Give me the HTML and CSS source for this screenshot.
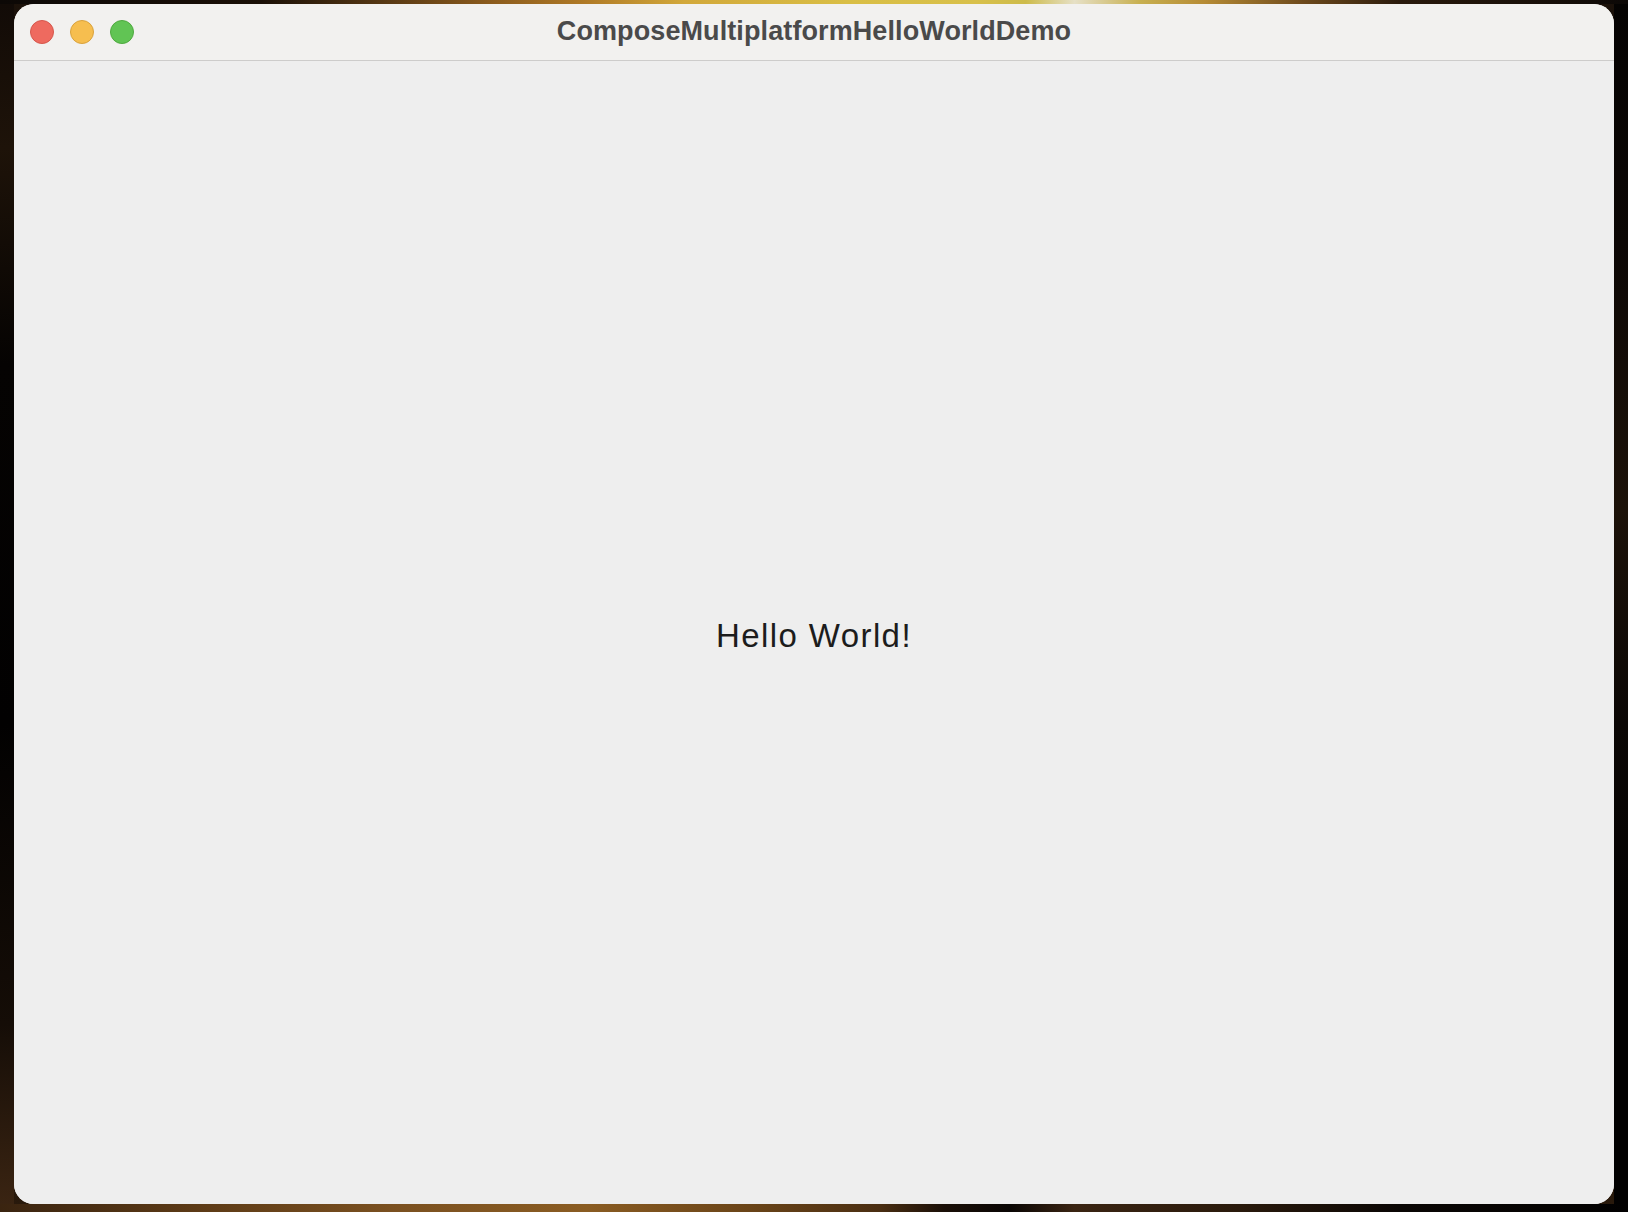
FILE: index.html
```html
<!DOCTYPE html>
<html lang="en">
<head>
<meta charset="utf-8">
<title>ComposeMultiplatformHelloWorldDemo</title>
<link rel="stylesheet" href="styles.css">
</head>
<body>
<div class="desktop">
  <div class="wall-top"></div>
  <div class="middle">
    <div class="wall-side left"></div>
    <div class="window">
      <div class="titlebar">
        <div class="lights">
          <span class="light close"></span>
          <span class="light minimize"></span>
          <span class="light zoom"></span>
        </div>
        <div class="title">ComposeMultiplatformHelloWorldDemo</div>
      </div>
      <div class="content">
        <p class="hello">Hello World!</p>
      </div>
    </div>
    <div class="wall-side right"></div>
  </div>
  <div class="wall-bottom"></div>
</div>
</body>
</html>
```
FILE: styles.css
```css
html, body {
  margin: 0;
  padding: 0;
  width: 1628px;
  height: 1212px;
  overflow: hidden;
  background: #050302;
}

.desktop {
  width: 1628px;
  height: 1212px;
  display: flex;
  flex-direction: column;
  background:
    linear-gradient(180deg, #1c120a 0%, #080504 20%, #020101 50%, #050302 75%, #2a1a0c 100%);
}

.wall-top {
  height: 4px;
  flex: none;
  background: linear-gradient(90deg,
    #0c0806 0%, #1a0f06 16%, #5a3a14 24%, #8a5a1c 30%, #b07a26 36%,
    #d2a83a 42%, #d9be45 52%, #d8c04a 60%, #cdbb4a 63%, #e6e0c6 66%, #c8b050 70%,
    #b68b34 74%, #6e4a1c 80%, #2a1a0c 86%, #0c0806 100%);
}

.middle {
  display: flex;
  flex: none;
  height: 1200px;
}

.wall-side {
  flex: none;
}
.wall-side.left {
  width: 14px;
  background: linear-gradient(180deg, #120b07 0%, #1e1309 12%, #050302 30%, #020101 60%, #150d07 85%, #3a2412 100%);
}
.wall-side.right {
  width: 14px;
  background: linear-gradient(180deg, #050302 0%, #0c0705 20%, #1c1209 42%, #0b0705 60%, #020101 80%, #020101 100%);
}

.wall-bottom {
  height: 8px;
  flex: none;
  background: linear-gradient(90deg,
    #3a2410 0%, #5c3a16 12%, #7a5020 24%, #8a5c22 36%, #6a4418 46%, #4a2e12 54%,
    #1a0f07 58%, #0a0604 62%, #3a2412 66%, #2a1a0c 76%, #0a0604 86%, #020101 100%);
}

.window {
  width: 1600px;
  height: 1200px;
  flex: none;
  display: flex;
  flex-direction: column;
  border-radius: 20px;
  overflow: hidden;
  background: #eeeeee;
}

.titlebar {
  height: 56px;
  flex: none;
  position: relative;
  display: flex;
  align-items: center;
  justify-content: center;
  background: #f2f1ef;
  border-bottom: 1px solid #cdcccb;
}

.lights {
  position: absolute;
  left: 16px;
  top: 16px;
  display: flex;
  gap: 16px;
}

.light {
  width: 24px;
  height: 24px;
  box-sizing: border-box;
  border-radius: 50%;
  display: block;
}
.light.close {
  background: #ee6a5f;
  border: 1px solid #d5574c;
}
.light.minimize {
  background: #f6be4f;
  border: 1px solid #d9a23d;
}
.light.zoom {
  background: #61c454;
  border: 1px solid #4fa93f;
}

.title {
  font-family: "Liberation Sans", Arial, sans-serif;
  font-weight: bold;
  font-size: 27px;
  color: #4a4a4a;
  letter-spacing: 0.1px;
  padding-bottom: 2px;
}

.content {
  flex: 1;
  display: flex;
  align-items: center;
  justify-content: center;
  background: #eeeeee;
}

.hello {
  margin: 0;
  font-family: "Liberation Sans", Arial, sans-serif;
  font-size: 33px;
  letter-spacing: 1.4px;
  color: #1c1c1c;
  padding-top: 6px;
}
```
